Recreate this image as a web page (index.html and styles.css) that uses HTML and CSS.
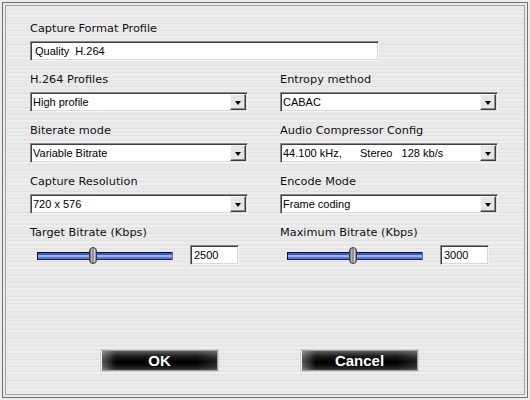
FILE: index.html
```html
<!DOCTYPE html>
<html>
<head>
<meta charset="utf-8">
<link rel="stylesheet" href="styles.css">
</head>
<body>
<div class="dialog">
  <div class="field">
    <div class="label">Capture Format Profile</div>
    <div class="textbox wide">Quality&nbsp; H.264</div>
  </div>
  <div class="grid">
    <div class="field">
      <div class="label">H.264 Profiles</div>
      <div class="combo"><span class="value">High profile</span><span class="arrow"></span></div>
    </div>
    <div class="field">
      <div class="label">Entropy method</div>
      <div class="combo"><span class="value">CABAC</span><span class="arrow"></span></div>
    </div>
    <div class="field">
      <div class="label">Biterate mode</div>
      <div class="combo"><span class="value">Variable Bitrate</span><span class="arrow"></span></div>
    </div>
    <div class="field">
      <div class="label">Audio Compressor Config</div>
      <div class="combo"><span class="value">44.100 kHz,&nbsp;&nbsp;&nbsp;&nbsp;&nbsp; Stereo&nbsp;&nbsp; 128 kb/s</span><span class="arrow"></span></div>
    </div>
    <div class="field">
      <div class="label">Capture Resolution</div>
      <div class="combo"><span class="value">720 x 576</span><span class="arrow"></span></div>
    </div>
    <div class="field">
      <div class="label">Encode Mode</div>
      <div class="combo"><span class="value">Frame coding</span><span class="arrow"></span></div>
    </div>
    <div class="field">
      <div class="label">Target Bitrate (Kbps)</div>
      <div class="slider-row">
        <div class="track"><span class="thumb" style="left: 51px"></span></div>
        <div class="textbox small">2500</div>
      </div>
    </div>
    <div class="field">
      <div class="label">Maximum Bitrate (Kbps)</div>
      <div class="slider-row">
        <div class="track"><span class="thumb" style="left: 61px"></span></div>
        <div class="textbox small">3000</div>
      </div>
    </div>
  </div>
  <div class="buttons">
    <button class="btn">OK</button>
    <button class="btn cancel">Cancel</button>
  </div>
</div>
</body>
</html>
```

FILE: styles.css
```css
html, body {
  margin: 0;
  padding: 0;
}

body {
  width: 530px;
  height: 400px;
  overflow: hidden;
  font-family: "Liberation Sans", Arial, sans-serif;
  color: #000;
}

.dialog {
  position: relative;
  width: 530px;
  height: 400px;
  box-sizing: border-box;
  padding: 21px 0 0 30px;
  background:
    repeating-linear-gradient(180deg,
      #e8e8e8 0 2px, #e0e0e0 2px 3px, #ededed 3px 5px, #e5e5e5 5px 6px,
      #eaeaea 6px 9px, #e2e2e2 9px 10px, #ececec 10px 13px, #e6e6e6 13px 15px,
      #efefef 15px 17px, #e3e3e3 17px 18px, #e9e9e9 18px 21px);
  box-shadow:
    inset 0 0 0 2px #ededed,
    inset 0 0 0 3px #707070,
    inset 0 0 0 5px #ebebeb,
    inset 0 0 0 6px #a4a4a4;
}

.label {
  height: 14px;
  line-height: 14px;
  padding-top: 1px;
  font-family: "DejaVu Sans", Verdana, sans-serif;
  font-size: 11.3px;
  color: #111;
  margin-bottom: 5px;
  white-space: nowrap;
}

.textbox,
.combo {
  box-sizing: border-box;
  height: 20px;
  background: #fff;
  border: 1px solid;
  border-color: #8a8a8a #f4f4f4 #f4f4f4 #8a8a8a;
  box-shadow: inset 1px 1px 0 #404040, inset -1px -1px 0 #d8d8d8;
  font-size: 11px;
  line-height: 18px;
  white-space: nowrap;
  overflow: hidden;
}

.textbox {
  padding-left: 4px;
}

.textbox.wide {
  width: 349px;
}

.textbox.small {
  width: 49px;
  margin-left: 17px;
  padding-left: 3px;
}

.grid {
  display: grid;
  grid-template-columns: 218px 218px;
  column-gap: 32px;
  row-gap: 11px;
  margin-top: 11px;
}

.combo {
  width: 218px;
  display: flex;
  align-items: center;
  padding: 1px 1px 1px 2px;
}

.combo .value {
  flex: 1;
  overflow: hidden;
}

.arrow {
  width: 16px;
  height: 16px;
  box-sizing: border-box;
  background: #e6e5e8;
  border: 1px solid;
  border-color: #f6f6f6 #404040 #404040 #f6f6f6;
  box-shadow: inset -1px -1px 0 #8c8c8c;
  display: flex;
  align-items: center;
  justify-content: center;
}

.arrow::after {
  content: "";
  width: 0;
  height: 0;
  border-left: 3.5px solid transparent;
  border-right: 3.5px solid transparent;
  border-top: 4px solid #000;
  margin-top: 1px;
}

.slider-row {
  height: 20px;
  display: flex;
  align-items: center;
}

.track {
  position: relative;
  width: 136px;
  height: 8px;
  margin-left: 7px;
  margin-top: 2px;
  box-sizing: border-box;
  border-left: 1px solid #101020;
  border-right: 1px solid #6070a0;
  background: linear-gradient(180deg,
    #0c1030 0 1px, #3a56c8 1px 3px, #9fb4f4 3px 5px, #5a76dc 5px 7px, #1a2050 7px 8px);
}

.thumb {
  position: absolute;
  top: -5px;
  width: 8px;
  height: 17px;
  box-sizing: border-box;
  border: 1px solid #3a3a3a;
  border-radius: 4px;
  background: linear-gradient(90deg, #5a5a5a 0, #c8c8c8 30%, #6a6a6a 50%, #d8d8d8 75%, #6a6a6a 100%);
}

.buttons {
  display: flex;
  gap: 83px;
  margin-top: 85px;
  margin-left: 71px;
}

.btn {
  width: 117px;
  height: 21px;
  padding: 0;
  box-sizing: border-box;
  border: 1px solid #a0a0a0;
  border-left-color: #f0f0f0;
  background:
    linear-gradient(90deg, rgba(255,255,255,0.35) 0, rgba(255,255,255,0) 12%, rgba(255,255,255,0) 82%, rgba(255,255,255,0.12) 100%),
    linear-gradient(180deg, #5a5a5a 0, #1a1a1a 30%, #000 55%, #111 80%, #3a3a3a 100%);
  color: #fff;
  font-family: "Liberation Sans", Arial, sans-serif;
  font-weight: bold;
  font-size: 15px;
  line-height: 19px;
  text-align: center;
  box-shadow: 0 0 0 1px #d0d0d0;
}
```
